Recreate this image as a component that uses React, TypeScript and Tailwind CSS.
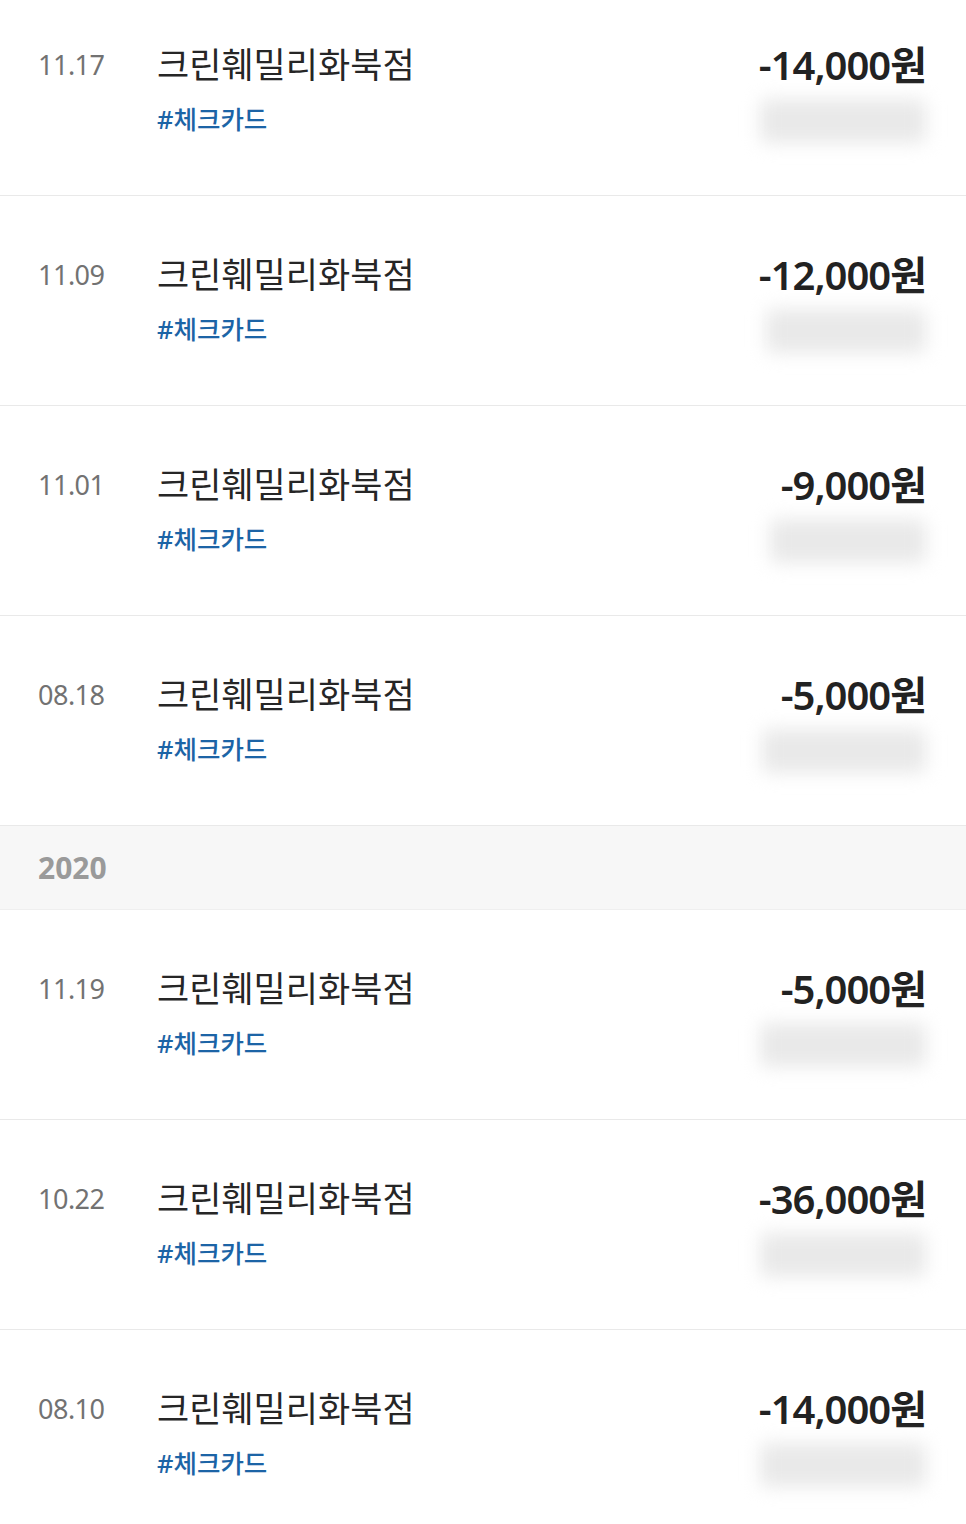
import React from 'react';

type Tx = { date: string; amount: string; blurW: number };
type Group = { year?: string; items: Tx[] };

const groups: Group[] = [
    {
        items: [
            { date: '11.17', amount: '-14,000원', blurW: 176 },
            { date: '11.09', amount: '-12,000원', blurW: 170 },
            { date: '11.01', amount: '-9,000원', blurW: 166 },
            { date: '08.18', amount: '-5,000원', blurW: 174 },
        ],
    },
    {
        year: '2020',
        items: [
            { date: '11.19', amount: '-5,000원', blurW: 176 },
            { date: '10.22', amount: '-36,000원', blurW: 176 },
            { date: '08.10', amount: '-14,000원', blurW: 176 },
        ],
    },
];

const Row: React.FC<{ tx: Tx; first?: boolean }> = ({ tx, first }) => (
    <div className={`flex border-b border-[#e9e9e9] pl-[38px] pr-[40px] ${first ? 'h-[196px] pt-[43px]' : 'h-[210px] pt-[57px]'}`}>
        {/* date */}
        <div className="w-[119px] shrink-0 text-[27px] leading-[44px] text-[#727272] tracking-[-0.5px]">{tx.date}</div>

        {/* merchant */}
        <div className="flex-1">
            <div className="text-[35px] leading-[44px] text-[#262626]">크린훼밀리화북점</div>
            <div className="mt-[16px] text-[25.5px] leading-[32px] font-medium text-[#1c64a6]">#체크카드</div>
        </div>

        {/* amount */}
        <div className="flex flex-col items-end">
            <div className="text-[40px] leading-[44px] font-semibold tracking-[-1px] text-[#222]">{tx.amount}</div>
            <div className="mt-[12px] h-[44px] bg-[#e9e9e9] blur-[9px] rounded-md" style={{ width: tx.blurW - 10 }} />
        </div>
    </div>
);

export default function App() {
    return (
        <div className="w-[966px] h-[1524px] overflow-hidden bg-white" style={{ fontFamily: '"Noto Sans", "Noto Sans CJK KR", sans-serif' }}>
            {groups.map((g, gi) => (
                <div key={gi}>
                    {g.year && (
                        <div className="h-[84px] flex items-center pl-[38px] bg-[#f7f7f7] border-b border-[#efefef] text-[30px] font-bold text-[#9a9a9a]">
                            {g.year}
                        </div>
                    )}
                    {g.items.map((tx, i) => (
                        <Row key={i} tx={tx} first={gi === 0 && i === 0} />
                    ))}
                </div>
            ))}
            <div className="h-[84px] bg-[#f7f7f7]" />
        </div>
    );
}
